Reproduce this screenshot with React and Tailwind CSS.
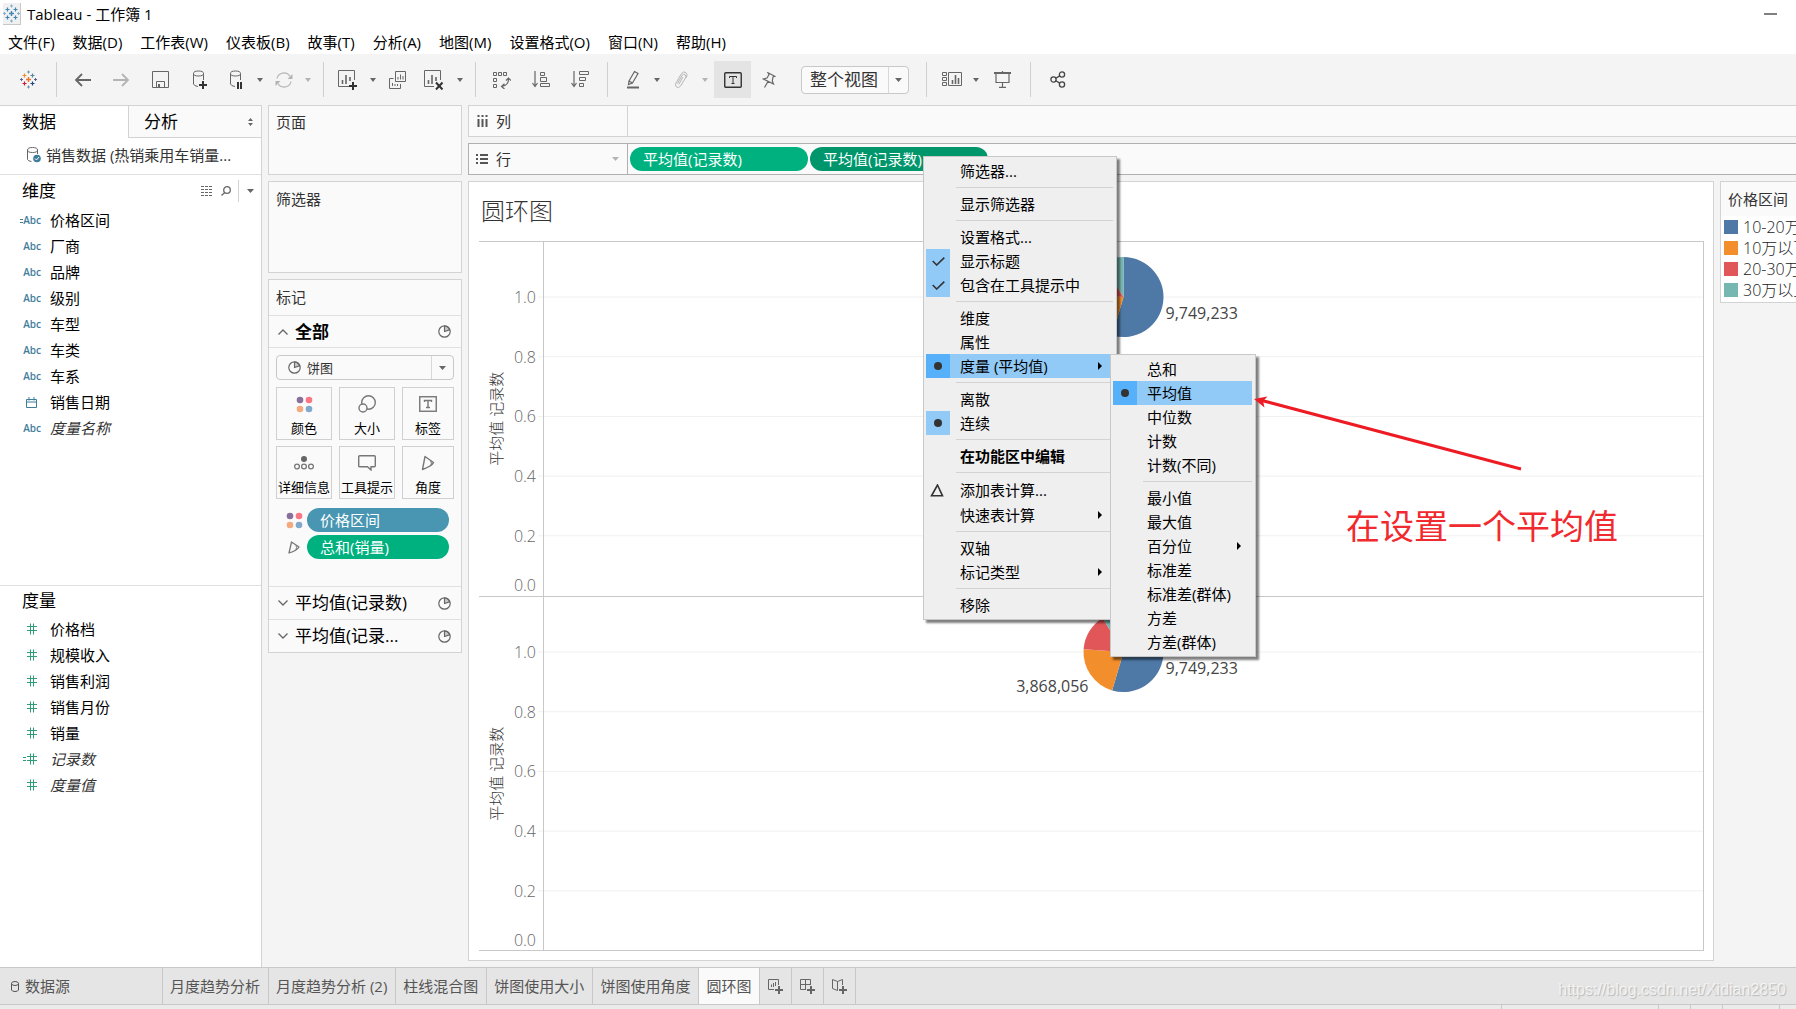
import React from "react";

const Svg = ({ w, h, children, className = "" }) => (
  <svg
    width={w}
    height={h}
    viewBox={`0 0 ${w} ${h}`}
    fill="none"
    stroke="currentColor"
    strokeWidth="1"
    className={`shrink-0 ${className}`}
    aria-hidden="true"
  >
    {children}
  </svg>
);

const plus = (x, y, r, color, w = 1) => (
  <path key={`${x}-${y}`} d={`M${x - r} ${y}H${x + r}M${x} ${y - r}V${y + r}`} stroke={color} strokeWidth={w} />
);

const TableauMark = ({ colors }) => (
  <Svg w={17} h={19}>
    {plus(8.5, 9.5, 2.5, colors[0], 1.4)}
    {plus(4.5, 5.5, 2, colors[1], 1.2)}
    {plus(12.5, 5.5, 2, colors[2], 1.2)}
    {plus(4.5, 13.5, 2, colors[3], 1.2)}
    {plus(12.5, 13.5, 2, colors[4], 1.2)}
    {plus(8.5, 2, 1.5, colors[5])}
    {plus(8.5, 17, 1.5, colors[6])}
    {plus(1.5, 9.5, 1.5, colors[7])}
    {plus(15.5, 9.5, 1.5, colors[8])}
  </Svg>
);

const Caret = ({ className = "" }) => (
  <Svg w={6} h={4} className={className}>
    <path d="M0 0H6L3 4Z" fill="currentColor" stroke="none" />
  </Svg>
);

const CaretWide = ({ className = "" }) => (
  <Svg w={7} h={4} className={className}>
    <path d="M0 0H7L3.5 4Z" fill="currentColor" stroke="none" />
  </Svg>
);

const MarkPie = () => (
  <Svg w={13} h={13}>
    <circle cx="6.5" cy="6.5" r="5.7" strokeWidth="1.2" />
    <path d="M6.5 6.5V1A5.5 5.5 0 0 1 11.6 4.8Z" fill="currentColor" fillOpacity="0.35" strokeWidth="1.1" />
  </Svg>
);

const ColorDots = () => (
  <Svg w={17} h={17} className="opacity-90">
    <circle cx="4" cy="4" r="3.3" fill="#7c6290" stroke="none" />
    <circle cx="13" cy="4" r="3.3" fill="#fb6879" stroke="none" />
    <circle cx="4" cy="13" r="3.3" fill="#f3a271" stroke="none" />
    <circle cx="13" cy="13" r="3.3" fill="#75a1c9" stroke="none" />
  </Svg>
);

const Angle = () => (
  <Svg w={14} h={16}>
    <path d="M4 1.5L12.5 7.5Q11 11 1.5 14.5Z" strokeWidth="1.4" strokeLinejoin="round" />
    <path d="M9.5 5.5Q11 8 10 10.5" />
  </Svg>
);

const SmallAngle = () => (
  <Svg w={12} h={13}>
    <path d="M3.5 1L11 6Q9 9.5 1 12Z" strokeWidth="1.3" strokeLinejoin="round" />
    <path d="M8 4.500Q9 6.500 8 8.500" />
  </Svg>
);

const Tool = ({ label, className = "", children }) => (
  <button type="button" aria-label={label} className={`flex h-[37px] shrink-0 items-center justify-center ${className}`}>
    {children}
  </button>
);

const Drop = ({ label, className = "text-[#666]" }) => (
  <Tool label={label} className="w-3.5">
    <Caret className={className} />
  </Tool>
);

const Sep = ({ className = "" }) => <span className={`h-[35px] w-px shrink-0 bg-[#d0d0d0] ${className}`} />;

const menus = ["文件(F)", "数据(D)", "工作表(W)", "仪表板(B)", "故事(T)", "分析(A)", "地图(M)", "设置格式(O)", "窗口(N)", "帮助(H)"];

function Toolbar() {
  return (
    <div className="flex h-[51px] shrink-0 items-center bg-[#f4f4f4] text-[#666]">
      <Tool label="起始页" className="w-14">
        <TableauMark colors={["#e8762d", "#eb912b", "#59879b", "#c72035", "#1f447e", "#7099a6", "#7199a6", "#5c6692", "#5c6692"]} />
      </Tool>
      <Sep />
      <Tool label="撤消" className="ml-1.5 w-[39px]">
        <Svg w={17} h={14}><path d="M1.5 7H17M8 1L2 7L8 13" strokeWidth="1.8" /></Svg>
      </Tool>
      <Tool label="恢复" className="w-[39px] text-[#b4b4b4]">
        <Svg w={17} h={14}><path d="M0 7H15.5M9 1L15 7L9 13" strokeWidth="1.8" /></Svg>
      </Tool>
      <Tool label="保存" className="w-[39px]">
        <Svg w={17} h={17}><path d="M0.5 0.5H16.5V16.5H0.5ZM4.5 16V10.5H12.5V16" /><path d="M6 13H8V16H6Z" fill="currentColor" stroke="none" /></Svg>
      </Tool>
      <Tool label="新建数据源" className="w-[39px]">
        <Svg w={16} h={20}>
          <ellipse cx="6.5" cy="3.5" rx="5" ry="2.5" />
          <path d="M1.5 3.5V14Q2 16 6 16.5M11.5 3.5V10" />
          <path d="M7 15H15M11 11V19" stroke="#333" strokeWidth="2" />
        </Svg>
      </Tool>
      <Tool label="暂停自动更新" className="w-[34px]">
        <Svg w={16} h={20}>
          <ellipse cx="7.5" cy="3.5" rx="5" ry="2.5" />
          <path d="M2.5 3.5V14Q3 16 7 16.5M12.5 3.5V10" />
          <path d="M10 12V19M13 12V19" stroke="#333" strokeWidth="2" />
        </Svg>
      </Tool>
      <Drop label="更新选项" />
      <Tool label="运行更新" className="w-[34px] text-[#b4b4b4]">
        <Svg w={18} h={16}>
          <path d="M2 6.5A7 6.8 0 0 1 15 4.5M16 9.5A7 6.8 0 0 1 3 11.5" strokeWidth="1.2" />
          <path d="M17.5 2V7H12.5ZM0.5 14V9H5.5Z" fill="currentColor" stroke="none" />
        </Svg>
      </Tool>
      <Drop label="运行选项" className="text-[#b4b4b4]" />
      <Sep className="ml-2" />
      <Tool label="新建工作表" className="ml-1.5 w-9">
        <Svg w={20} h={21}>
          <path d="M16.5 11V1.5H0.5V17.5H11" />
          <path d="M4.5 15V11M8 15V6M12 12V8" strokeWidth="1.6" />
          <path d="M11 17H19M15 13V21" stroke="#333" strokeWidth="2" />
        </Svg>
      </Tool>
      <Drop label="新建选项" />
      <Tool label="复制工作表" className="w-[34px]">
        <Svg w={17} h={18}>
          <path d="M6.5 0.5H16.5V10.5H6.5ZM4.5 7.5H0.5V17.5H11.5V13" />
          <path d="M9 8.5V6M11.5 8.5V3.5M14 8.5V5M3.5 15V12M6 15V13M8.5 15V13" />
        </Svg>
      </Tool>
      <Tool label="清除工作表" className="w-[39px]">
        <Svg w={20} h={21}>
          <path d="M16.5 11V1.5H0.5V17.5H10" />
          <path d="M4.5 15V11M8 15V6M12 12V8" strokeWidth="1.6" />
          <path d="M12 13.5L18.5 20.5M18.5 13.5L12 20.5" stroke="#333" strokeWidth="2" />
        </Svg>
      </Tool>
      <Drop label="清除选项" />
      <Sep className="ml-2" />
      <Tool label="交换行和列" className="ml-1.5 w-[39px]">
        <Svg w={18} h={18}>
          <path d="M0.5 1.5H3.5V4.5H0.5ZM5.5 1.5H8.5V4.5H5.5ZM10.5 1.5H13.5V4.5H10.5ZM0.5 7.5H3.5V10.5H0.5ZM0.5 13.5H3.5V16.5H0.5Z" />
          <path d="M15.5 7Q16 14 9 15.5M13 9.5L15.5 7L18 9.5M11.5 12.8L8.5 15.5L11.5 18" strokeWidth="1.2" />
        </Svg>
      </Tool>
      <Tool label="升序排序" className="w-[39px]">
        <Svg w={18} h={17}>
          <path d="M3 0V15M0.5 12L3 15.5L5.5 12" strokeWidth="1.2" />
          <path d="M8.5 1.5H12.5V4.5H8.5ZM8.5 6.5H14.5V10.5H8.5ZM8.5 12.5H17.5V15.5H8.5Z" />
        </Svg>
      </Tool>
      <Tool label="降序排序" className="w-[39px]">
        <Svg w={18} h={17}>
          <path d="M3 0V15M0.5 12L3 15.5L5.5 12" strokeWidth="1.2" />
          <path d="M8.5 0.5H17.5V3.5H8.5ZM8.5 6.5H14.5V9.5H8.5ZM8.5 12.5H12.5V15.5H8.5Z" />
        </Svg>
      </Tool>
      <Sep className="ml-2" />
      <Tool label="突出显示" className="ml-2 w-[34px]">
        <Svg w={14} h={19}>
          <path d="M8.5 1.5L12 3.5L6.5 13L3 11ZM3 11L2.5 14.5L6.5 13" strokeWidth="1.2" />
          <path d="M1 17.5H13" strokeWidth="2" />
        </Svg>
      </Tool>
      <Drop label="突出显示选项" />
      <Tool label="成员分组" className="w-[34px] text-[#b4b4b4]">
        <Svg w={14} h={18}>
          <path d="M3.5 12.5L8 4.5Q9.5 2.5 11 3.5Q12.6 4.7 11.5 7L6.5 15Q4.5 17.5 2.5 16Q0.5 14.500 2 12L7.500 2.500Q9.500 0 11.800 1.500Q14 3.500 12.500 6.500M4.800 13.300L9 6" />
        </Svg>
      </Tool>
      <Drop label="分组选项" className="text-[#b4b4b4]" />
      <Tool label="显示标记标签" className="ml-0.5 w-[37px] bg-[#e4e4e4] text-[#333]">
        <Svg w={18} h={16}>
          <rect x="0.75" y="0.75" width="16.500" height="14.500" rx="1" strokeWidth="1.4" />
          <path d="M5.500 6V4.500H12.500V6M9 4.500V11.500M7.500 11.500H10.500" />
        </Svg>
      </Tool>
      <Tool label="固定轴" className="w-9">
        <Svg w={14} h={16}>
          <path d="M6 0.800L12.800 4.300L11 5L10.300 9L11.500 12L1.500 7L5 6L7 2.500ZM6 9.500L2.500 15.500" strokeWidth="1.200" />
        </Svg>
      </Tool>
      <div className="relative ml-3.5 h-7 w-[108px] shrink-0">
        <select aria-label="适合" className="h-full w-full appearance-none rounded-sm border border-[#c8c8c8] bg-[#fafafa] pl-2 text-[17px] leading-6 text-[#333]">
          <option>整个视图</option>
        </select>
        <span className="pointer-events-none absolute inset-y-px right-px flex w-5 items-center justify-center border-l border-[#d8d8d8]">
          <CaretWide />
        </span>
      </div>
      <Sep className="ml-[17px]" />
      <Tool label="显示/隐藏卡" className="ml-2 w-[34px]">
        <Svg w={20} h={15}>
          <path d="M0.500 0.500H4.500V3.500H0.500ZM0.500 5.500H4.500V8.500H0.500ZM0.500 10.500H4.500V13.500H0.500ZM6.500 0.500H19.500V13.500H6.500Z" />
          <path d="M10.500 12V8M13.500 12V3M16.500 12V6" strokeWidth="1.600" />
        </Svg>
      </Tool>
      <Drop label="卡选项" />
      <Tool label="演示模式" className="w-[39px]">
        <Svg w={17} h={17}>
          <path d="M0 2H17" strokeWidth="2" />
          <path d="M2 3V11.500H15V3M8.500 0V1M8.500 12V16M5 16.300H12" strokeWidth="1.200" />
        </Svg>
      </Tool>
      <Sep className="ml-2" />
      <Tool label="共享" className="ml-[7px] w-[39px] text-[#444]">
        <Svg w={16} h={17}>
          <circle cx="3.500" cy="8.500" r="2.600" strokeWidth="1.300" />
          <circle cx="12" cy="3.500" r="2.600" strokeWidth="1.300" />
          <circle cx="12" cy="13.500" r="2.600" strokeWidth="1.300" />
          <path d="M5.800 7.200L9.700 4.900M5.800 9.800L9.700 12.100" strokeWidth="1.300" />
        </Svg>
      </Tool>
    </div>
  );
}

const dimensions = [
  ["calc", "价格区间"], ["abc", "厂商"], ["abc", "品牌"], ["abc", "级别"], ["abc", "车型"],
  ["abc", "车类"], ["abc", "车系"], ["date", "销售日期"], ["abc", "度量名称", true],
];
const measures = [
  ["num", "价格档"], ["num", "规模收入"], ["num", "销售利润"], ["num", "销售月份"], ["num", "销量"],
  ["numcalc", "记录数", true], ["num", "度量值", true],
];

function FieldIcon({ kind }) {
  if (kind === "date")
    return (
      <Svg w={11} h={11} className="mr-1 text-[#3f7d9c]">
        <path d="M0.500 2.500H10.500V10.500H0.500ZM0.500 5H10.500M3 0V3.500M8 0V3.500" />
      </Svg>
    );
  if (kind === "num" || kind === "numcalc")
    return (
      <Svg w={16} h={12} className="mr-1 text-[#2f9b79]">
        <path d="M6 3.500H16M6 7.500H16M9.500 0.500V11.500M12.500 0.500V11.500" />
        {kind === "numcalc" && <path d="M2 4.500H5M2 7.500H5" />}
      </Svg>
    );
  return (
    <span className="flex items-center text-[10px] font-semibold text-[#3f7d9c]">
      {kind === "calc" && <Svg w={3} h={5}><path d="M0 1.500H3M0 4.500H3" /></Svg>}
      Abc
    </span>
  );
}

const FieldList = ({ items }) => (
  <ul>
    {items.map(([kind, name, italic]) => (
      <li key={name} className="flex h-[26px] items-center">
        <span className="flex w-[41px] items-center justify-end">
          <FieldIcon kind={kind} />
        </span>
        <span className={italic ? "ml-[9px] italic text-[#333]" : "ml-[9px]"}>{name}</span>
      </li>
    ))}
  </ul>
);

function DataPane() {
  return (
    <aside className="flex w-[262px] shrink-0 flex-col border-r border-t border-[#d3d3d3] bg-white text-[15px] text-black">
      <div className="flex h-8 shrink-0 text-[17px]">
        <button type="button" className="w-32 pl-[22px] text-left">数据</button>
        <button type="button" className="flex flex-1 items-center justify-between border-b border-l border-[#d3d3d3] bg-[#fafafa] pl-[15px] pr-2">
          分析
          <Svg w={5} h={8} className="text-[#666]">
            <path d="M0 3H5L2.500 0ZM0 5H5L2.500 8Z" fill="currentColor" stroke="none" />
          </Svg>
        </button>
      </div>
      <div className="flex h-[37px] shrink-0 items-center border-b border-[#e0e0e0] pb-0.5 pl-[27px] text-[#333]">
        <Svg w={14} h={16} className="text-[#666]">
          <ellipse cx="5.500" cy="3" rx="5" ry="2.500" />
          <path d="M0.500 3V12.500Q1 14 4.500 14.500M10.500 3V7" />
          <circle cx="10" cy="11.500" r="3.800" fill="#3f7d9c" stroke="none" />
          <path d="M8 11.500L9.500 13L12 10" stroke="#fff" />
        </Svg>
        <span className="ml-[5px]">销售数据 (热销乘用车销量...</span>
      </div>
      <section className="flex flex-[411] flex-col">
        <div className="flex h-8 items-center pl-[22px] pr-[7px] text-[#666]">
          <h2 className="flex-1 text-[17px] text-black">维度</h2>
          <Svg w={12} h={10}>
            <path d="M0 0.500H12M0 3.500H12M0 6.500H12M0 9.500H12" strokeDasharray="3 1" />
          </Svg>
          <Svg w={10} h={10} className="ml-2">
            <circle cx="6" cy="4" r="3.300" strokeWidth="1.300" />
            <path d="M3.800 6.500L0.500 9.500" strokeWidth="1.300" />
          </Svg>
          <span className="ml-[7px] mr-2 h-[22px] w-px bg-[#d3d3d3]" />
          <CaretWide />
        </div>
        <FieldList items={dimensions} />
      </section>
      <section className="flex-[382] border-t border-[#e0e0e0]">
        <h2 className="h-[30px] pl-[22px] text-[17px] leading-[30px]">度量</h2>
        <FieldList items={measures} />
      </section>
    </aside>
  );
}

const MarkButton = ({ label, children }) => (
  <button type="button" className="flex h-[53px] flex-col items-center justify-between overflow-hidden whitespace-nowrap border border-[#d0d0d0] bg-[#fafafa] pb-px pt-[7px] text-[13px] leading-5 text-black">
    <span className="flex h-[18px] items-center text-[#777]">{children}</span>
    {label}
  </button>
);

const LayerRow = ({ label, bold, open, className }) => (
  <button type="button" className={`flex w-full items-center border-t border-[#e0e0e0] pl-[9px] pr-2.5 text-left text-[17px] text-black ${className}`}>
    <Svg w={10} h={6} className="mr-[7px] text-[#666]">
      <path d={open ? "M0.500 5.500L5 1L9.500 5.500" : "M0.500 0.500L5 5L9.500 0.500"} strokeWidth="1.300" />
    </Svg>
    <span className={bold ? "flex-1 font-bold" : "flex-1"}>{label}</span>
    <span className="text-[#666]"><MarkPie /></span>
  </button>
);

const card = "border border-[#d3d3d3] bg-[#fafafa]";

function Cards() {
  return (
    <div className="ml-1.5 flex w-[194px] shrink-0 flex-col gap-1.5 text-[15px] text-[#333]">
      <section className={`h-[70px] px-[7px] pt-[5px] ${card}`}>页面</section>
      <section className={`h-[92px] px-[7px] pt-1.5 ${card}`}>筛选器</section>
      <section className={card}>
        <h2 className="h-[35px] px-[7px] leading-[35px]">标记</h2>
        <LayerRow label="全部" bold open className="h-8" />
        <div className="border-t border-[#e0e0e0] px-[7px] pb-[27px] pt-[7px]">
          <div className="relative h-[25px]">
            <select aria-label="标记类型" className="h-full w-full appearance-none rounded-sm border border-[#c8c8c8] bg-[#fafafa] pl-[30px] text-[13px] leading-5 text-[#333]">
              <option>饼图</option>
            </select>
            <span className="pointer-events-none absolute inset-y-0 left-3 flex items-center text-[#666]"><MarkPie /></span>
            <span className="pointer-events-none absolute inset-y-px right-px flex w-[22px] items-center justify-center border-l border-[#d8d8d8] text-[#666]"><CaretWide /></span>
          </div>
          <div className="mt-[7px] grid grid-cols-[56px_56px_52px] gap-x-[7px] gap-y-1.5">
            <MarkButton label="颜色"><ColorDots /></MarkButton>
            <MarkButton label="大小">
              <Svg w={18} h={18}><circle cx="10.500" cy="7.500" r="6.800" strokeWidth="1.400" /><circle cx="5" cy="13" r="4" strokeWidth="1.400" fill="#fafafa" /></Svg>
            </MarkButton>
            <MarkButton label="标签">
              <Svg w={18} h={16}><rect x="0.750" y="0.750" width="16.500" height="14.500" strokeWidth="1.400" /><path d="M5.500 6V4.500H12.500V6M9 4.500V11.500M7 11.500H11" strokeWidth="1.400" /></Svg>
            </MarkButton>
            <MarkButton label="详细信息">
              <Svg w={20} h={14}><circle cx="10" cy="3" r="3" fill="#666" stroke="none" /><circle cx="3" cy="10.500" r="2.400" strokeWidth="1.300" /><circle cx="10" cy="10.500" r="2.400" strokeWidth="1.300" /><circle cx="17" cy="10.500" r="2.400" strokeWidth="1.300" /></Svg>
            </MarkButton>
            <MarkButton label="工具提示">
              <Svg w={18} h={16}><path d="M1.700 0.700H16.300Q17.300 0.700 17.300 1.700V10.700Q17.300 11.700 16.300 11.700H13V15L9.500 11.700H1.700Q0.700 11.700 0.700 10.700V1.700Q0.700 0.700 1.700 0.700Z" strokeWidth="1.400" /></Svg>
            </MarkButton>
            <MarkButton label="角度"><Angle /></MarkButton>
          </div>
          <div className="mt-[9px] flex flex-col gap-[3px] text-[#777]">
            <div className="flex items-center pr-[5px]">
              <span className="flex w-[31px] justify-center pl-[5px]"><ColorDots /></span>
              <button type="button" className="h-6 flex-1 rounded-full bg-[#4996b2] pl-[13px] text-left leading-6 text-white">价格区间</button>
            </div>
            <div className="flex items-center pr-[5px]">
              <span className="flex w-[31px] justify-center pl-[5px]"><SmallAngle /></span>
              <button type="button" className="h-6 flex-1 rounded-full bg-[#00b180] pl-[13px] text-left leading-6 text-white">总和(销量)</button>
            </div>
          </div>
        </div>
        <LayerRow label="平均值(记录数)" className="h-[33px]" />
        <LayerRow label="平均值(记录..." className="h-[33px]" />
      </section>
    </div>
  );
}

const AXIS_MAX = 1.1845;
const yAt = (v) => `${(1 - v / AXIS_MAX) * 100}%`;
const ticks = [1, 0.8, 0.6, 0.4, 0.2];
const slices = [
  [0, 196.5, "#4e79a7"],
  [196.5, 274, "#f28e2b"],
  [274, 328.5, "#e15759"],
  [328.5, 360, "#76b7b2"],
];

function slicePath(from, to, r) {
  const p = (a) => {
    const t = (a * Math.PI) / 180;
    return `${(r * Math.sin(t)).toFixed(2)} ${(-r * Math.cos(t)).toFixed(2)}`;
  };
  return `M0 0L${p(from)}A${r} ${r} 0 ${to - from > 180 ? 1 : 0} 1 ${p(to)}Z`;
}

function Pane() {
  return (
    <div className="flex min-h-0 flex-1 border-b border-[#c8c8c8]">
      <svg className="h-full w-16 shrink-0 overflow-visible" fill="#666" fontSize="16">
        <svg x="18" y="50%" className="overflow-visible">
          <text transform="rotate(-90)" textAnchor="middle" y="5" fontSize="15" fontWeight="300" fill="#333">平均值 记录数</text>
        </svg>
        {ticks.map((v) => (
          <React.Fragment key={v}>
            <line x1="59" x2="64" y1={yAt(v)} y2={yAt(v)} stroke="#f0f0f0" />
            <text x="57" y={yAt(v)} dy="6" textAnchor="end" className="font-['Open_Sans'] font-light">{v.toFixed(1)}</text>
          </React.Fragment>
        ))}
        <text x="57" y="100%" dy="-5" textAnchor="end" className="font-['Open_Sans'] font-light">0.0</text>
      </svg>
      <div className="min-w-0 flex-1 border-l border-r border-[#c8c8c8]">
        <svg className="h-full w-full">
          {ticks.map((v) => (
            <line key={v} x1="0" x2="100%" y1={yAt(v)} y2={yAt(v)} stroke="#f0f0f0" />
          ))}
          <svg x="50%" y={yAt(1)} className="overflow-visible">
            {slices.map(([a, b, c]) => <path key={c} d={slicePath(a, b, 40)} fill={c} />)}
            <g className="font-['Open_Sans']" fontSize="16" fill="#444">
              <text x="42" y="22">9,749,233</text>
              <text x="-35" y="40" textAnchor="end">3,868,056</text>
            </g>
          </svg>
        </svg>
      </div>
    </div>
  );
}

const legend = [["#4e79a7", "10-20万"], ["#f28e2b", "10万以下"], ["#e15759", "20-30万"], ["#76b7b2", "30万以上"]];

function Workspace() {
  return (
    <div className="ml-1.5 flex min-w-0 flex-1 flex-col gap-1.5 text-[15px] text-[#333]">
      <div className="flex h-8 shrink-0 border-y border-l border-[#d3d3d3] bg-[#fafafa]">
        <div className="flex w-[159px] items-center border-r border-[#d3d3d3] pl-2">
          <Svg w={11} h={12} className="mr-2 text-[#555]"><path d="M1.500 0V2M5.500 0V2M9.500 0V2M1.500 4V12M5.500 4V12M9.500 4V12" strokeWidth="2" /></Svg>
          列
        </div>
      </div>
      <div className="flex h-8 shrink-0 border-y border-l border-[#b0b0b0] bg-[#fafafa]">
        <div className="flex w-[159px] items-center border-r border-[#b0b0b0] pl-[7px] pr-2">
          <Svg w={12} h={10} className="mr-2 text-[#555]"><path d="M0 1H2M0 5H2M0 9H2M4 1H12M4 5H12M4 9H12" strokeWidth="2" /></Svg>
          <span className="flex-1">行</span>
          <CaretWide className="text-[#b4b4b4]" />
        </div>
        <div className="flex items-center gap-0.5 pl-0.5 text-white">
          <button type="button" className="h-6 w-[178px] rounded-full bg-[#00b180] pl-[13px] text-left leading-6">平均值(记录数)</button>
          <button type="button" className="h-6 w-[178px] rounded-full bg-[#00966b] pl-[13px] text-left leading-6">平均值(记录数)</button>
        </div>
      </div>
      <div className="flex min-h-0 flex-1">
        <section className="mb-1.5 flex min-w-0 flex-1 flex-col border border-[#d3d3d3] bg-white pb-[9px] pl-2.5 pr-[9px]">
          <h1 className="h-[59px] shrink-0 pl-0.5 text-2xl font-light leading-[57px]">圆环图</h1>
          <div className="flex min-h-0 flex-1 flex-col border-t border-[#c8c8c8]">
            <Pane />
            <Pane />
          </div>
        </section>
        <section className="ml-1.5 h-[122px] w-[76px] shrink-0 overflow-hidden whitespace-nowrap border-y border-l border-[#d3d3d3] bg-white">
          <h2 className="h-[34px] bg-[#fafafa] pl-[7px] leading-[34px]">价格区间</h2>
          <ul className="text-base font-light text-[#222]">
            {legend.map(([c, t]) => (
              <li key={t} className="flex h-[21px] items-center pl-[3px]">
                <svg width="14" height="14" className="mr-[5px] shrink-0"><rect width="14" height="14" fill={c} /></svg>
                {t}
              </li>
            ))}
          </ul>
        </section>
      </div>
    </div>
  );
}

const mainMenu = [
  { t: "筛选器..." }, null,
  { t: "显示筛选器" }, null,
  { t: "设置格式..." }, { t: "显示标题", mark: "check" }, { t: "包含在工具提示中", mark: "check" }, null,
  { t: "维度" }, { t: "属性" }, { t: "度量 (平均值)", mark: "dot", active: true, sub: true }, null,
  { t: "离散" }, { t: "连续", mark: "dot" }, null,
  { t: "在功能区中编辑", bold: true }, null,
  { t: "添加表计算...", mark: "delta" }, { t: "快速表计算", sub: true }, null,
  { t: "双轴" }, { t: "标记类型", sub: true }, null,
  { t: "移除" },
];
const subMenu = [
  { t: "总和" }, { t: "平均值", mark: "dot", active: true }, { t: "中位数" }, { t: "计数" }, { t: "计数(不同)" }, null,
  { t: "最小值" }, { t: "最大值" }, { t: "百分位", sub: true }, { t: "标准差" }, { t: "标准差(群体)" }, { t: "方差" }, { t: "方差(群体)" },
];

function Menu({ items, className, children }) {
  return (
    <div role="menu" className={`absolute border border-[#c8c8c8] bg-[#efefef] py-0.5 pl-0.5 pr-[3px] text-[15px] text-black shadow-[3px_3px_2px_rgba(0,0,0,0.5)] ${className}`}>
      {items.map((it, i) =>
        it === null ? (
          <div key={i} className="my-1 ml-[30px] h-px bg-[#d3d3d3]" />
        ) : (
          <div key={it.t} className="relative">
            <button
              type="button"
              role="menuitem"
              className={`flex w-full items-center text-left ${it.mark === "delta" ? "h-[26px]" : "h-6"} ${it.active ? "bg-[#91c9f7]" : ""} ${it.bold ? "font-bold" : ""}`}
            >
              <span className={`flex h-full w-6 items-center justify-center text-[#333] ${it.mark && it.mark !== "delta" ? (it.active ? "bg-[#56b0fa]" : "bg-[#91c9f7]") : ""}`}>
                {it.mark === "check" && <Svg w={13} h={9}><path d="M0.700 4L4.700 8L12.300 0.700" strokeWidth="1.600" /></Svg>}
                {it.mark === "dot" && <Svg w={8} h={8}><circle cx="4" cy="4" r="4" fill="currentColor" stroke="none" /></Svg>}
                {it.mark === "delta" && <Svg w={14} h={13} className="mr-0.5"><path d="M7.500 1L12.500 11.800H1.500Z" strokeWidth="1.600" /></Svg>}
              </span>
              <span className="ml-2.5 flex-1">{it.t}</span>
              {it.sub && (
                <span className="pr-[11px]">
                  <Svg w={4} h={8}><path d="M0 0V8L4 4Z" fill="currentColor" stroke="none" /></Svg>
                </span>
              )}
            </button>
            {it.active && children}
          </div>
        )
      )}
    </div>
  );
}

const sheets = ["月度趋势分析", "月度趋势分析 (2)", "柱线混合图", "饼图使用大小", "饼图使用角度", "圆环图"];

function SheetTabs() {
  return (
    <nav className="flex h-[38px] shrink-0 border-y border-[#c8c8c8] bg-[#e5e5e5] text-[15px] text-[#555]">
      <button type="button" className="flex w-[163px] items-center gap-1.5 border-r border-[#c8c8c8] pl-[11px]">
        <Svg w={8} h={11}><ellipse cx="4" cy="2.500" rx="3.500" ry="2" /><path d="M0.500 2.500V9Q1 10.500 4 10.500Q7 10.500 7.500 9V2.500" /></Svg>
        数据源
      </button>
      {sheets.map((s) => (
        <button key={s} type="button" className={`whitespace-nowrap border-r border-[#c8c8c8] pl-[7px] pr-2 ${s === "圆环图" ? "bg-[#fafafa]" : ""}`}>{s}</button>
      ))}
      <button type="button" aria-label="新建工作表" className="flex w-8 items-center justify-center border-r border-[#c8c8c8] text-[#666]">
        <Svg w={15} h={15}><path d="M10.500 6V0.500H0.500V10.500H6M3.500 8V5.500M5.500 8V4M7.500 7V3" /><path d="M7 11H15M11 7V15" strokeWidth="2" /></Svg>
      </button>
      <button type="button" aria-label="新建仪表板" className="flex w-8 items-center justify-center border-r border-[#c8c8c8] text-[#666]">
        <Svg w={15} h={15}><path d="M10.500 6V0.500H0.500V10.500H6M5.500 0.500V10.500M0.500 5.500H10.500" /><path d="M7 11H15M11 7V15" strokeWidth="2" /></Svg>
      </button>
      <button type="button" aria-label="新建故事" className="flex w-8 items-center justify-center border-r border-[#c8c8c8] text-[#666]">
        <Svg w={15} h={15}><path d="M10.500 6V0.500L5.500 2.500L0.500 0.500V9.500L5.500 11.500V2.500" /><path d="M7 11H15M11 7V15" strokeWidth="2" /></Svg>
      </button>
    </nav>
  );
}

export default function App() {
  return (
    <div className="relative flex h-screen flex-col overflow-hidden bg-[#f4f4f4] font-['Open_Sans','Noto_Sans_CJK_SC',sans-serif]">
      <header className="flex h-[30px] shrink-0 items-center bg-white pb-0.5 pl-[3px] pr-[19px] text-[15px] text-black">
        <span className="mr-1.5 flex h-[22px] w-[18px] items-center justify-center border-b border-r border-[#c8c8c8] bg-[#f0f0f0]">
          <TableauMark colors={["#3f86b5", "#3f86b5", "#3f86b5", "#3f86b5", "#3f86b5", "#7fb0cf", "#7fb0cf", "#7fb0cf", "#7fb0cf"]} />
        </span>
        <span className="flex-1">Tableau - 工作簿 1</span>
        <button type="button" aria-label="最小化" className="h-4"><Svg w={13} h={2}><path d="M0 1H13" /></Svg></button>
      </header>
      <nav className="flex h-6 shrink-0 items-center gap-[18px] bg-white pl-2 text-[15px] text-black">
        {menus.map((m) => <button key={m} type="button">{m}</button>)}
      </nav>
      <Toolbar />
      <main className="flex min-h-0 flex-1">
        <DataPane />
        <Cards />
        <Workspace />
      </main>
      <SheetTabs />
      <footer className="flex h-1 shrink-0 justify-end bg-[#ebebeb]">
        <span className="w-[157px] border-l border-[#c8c8c8]" />
        <span className="w-8 border-l border-[#c8c8c8]" />
        <span className="w-8 border-l border-[#c8c8c8]" />
        <span className="w-[57px] border-l border-[#c8c8c8]" />
        <span className="w-[17px] border-l border-[#c8c8c8]" />
      </footer>

      <Menu items={mainMenu} className="left-[923px] top-[156px] w-[194px]">
        <Menu items={subMenu} className="left-[184px] top-0 w-[146px]" />
      </Menu>

      <div className="pointer-events-none absolute left-[1254px] top-[395px] text-[#ed1c24]">
        <Svg w={268} h={76}>
          <path d="M8 5.500L267 74" strokeWidth="3" />
          <path d="M0 4L13.500 1.500L9 6L10.500 12.500Z" fill="currentColor" stroke="none" />
        </Svg>
      </div>
      <p className="pointer-events-none absolute left-[1346px] top-[502px] whitespace-nowrap text-[34px] leading-[48px] text-[#f02a2f]">在设置一个平均值</p>
      <p className="pointer-events-none absolute bottom-[7px] right-2.5 font-['Liberation_Sans',sans-serif] text-base leading-6 text-white/70 [text-shadow:1px_1px_1px_rgba(0,0,0,0.2)]">https://blog.csdn.net/Xidian2850</p>
    </div>
  );
}
